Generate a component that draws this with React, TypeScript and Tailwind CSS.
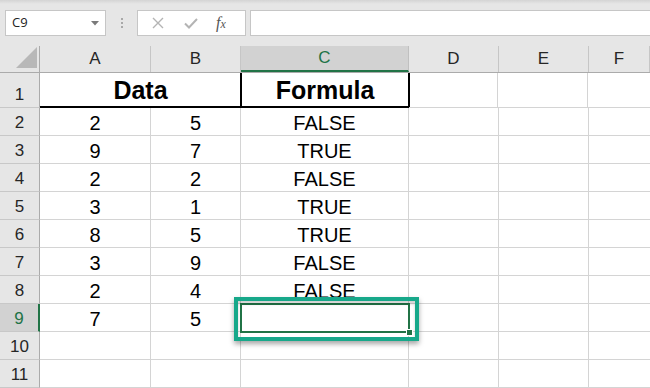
import React from "react";

const COLS = ["A", "B", "C", "D", "E", "F"];
const WIDTHS = ["w-[111px]", "w-[90px]", "w-[168px]", "w-[90px]", "w-[90px]", "flex-1"];

const rows: [string, string, string][] = [
  ["2", "5", "FALSE"],
  ["9", "7", "TRUE"],
  ["2", "2", "FALSE"],
  ["3", "1", "TRUE"],
  ["8", "5", "TRUE"],
  ["3", "9", "FALSE"],
  ["2", "4", "FALSE"],
  ["7", "5", ""],
  ["", "", ""],
  ["", "", ""],
];

function RowHeader({ n, active, tall }: { n: number; active?: boolean; tall?: boolean }) {
  return (
    <div
      className={`w-[40px] shrink-0 flex items-end justify-center border-r text-[17px] ${
        tall ? "leading-[24px]" : "leading-[25px]"
      } ${
        active
          ? "bg-[#d2d2d2] border-r-2 border-r-[#217346] text-[#217346]"
          : "bg-[#e6e6e6] border-[#ababab] text-[#262626]"
      } border-b border-b-[#c8c8c8]`}
    >
      {n}
    </div>
  );
}

export default function App() {
  return (
    <div className="relative w-[650px] h-[388px] overflow-hidden bg-white font-['Liberation_Sans',Arial,sans-serif] select-none">
      {/* formula bar */}
      <div className="h-[46px] bg-[#e6e6e6] relative">
        <div className="h-[4px] bg-gradient-to-b from-[#d4d4d4] to-[#e6e6e6]" />
        <div className="flex items-center h-[26px] mt-[6px]">
          <div className="ml-[5px] w-[101px] h-[26px] bg-white border border-[#c6c6c6] flex items-center justify-between pl-[6px] pr-[6px]">
            <span className="text-[13px] text-[#222] font-['Open_Sans',sans-serif]">C9</span>
            <svg width="8" height="5" viewBox="0 0 8 5">
              <path d="M0 0h8L4 4.5z" fill="#7a7a7a" />
            </svg>
          </div>
          <div className="w-[31px] flex flex-col items-center gap-[2px]">
            <span className="w-[2px] h-[2px] bg-[#a8a8a8]" />
            <span className="w-[2px] h-[2px] bg-[#a8a8a8]" />
            <span className="w-[2px] h-[2px] bg-[#a8a8a8]" />
          </div>
          <div className="w-[109px] h-[26px] bg-white border border-[#c6c6c6] flex items-center">
            <svg width="12" height="12" viewBox="0 0 12 12" className="ml-[14px]">
              <path d="M1 1l10 10M11 1L1 11" stroke="#b4b4b4" strokeWidth="1.4" />
            </svg>
            <svg width="14" height="11" viewBox="0 0 14 11" className="ml-[20px]">
              <path d="M1 5.5l4 4L13 1" stroke="#b4b4b4" strokeWidth="2" fill="none" />
            </svg>
            <span className="ml-[18px] italic text-[16px] text-[#555] font-['Liberation_Serif',serif]">
              f<span className="text-[12px]">x</span>
            </span>
          </div>
          <div className="ml-[4px] flex-1 h-[26px] bg-white border border-[#c6c6c6] border-r-0" />
        </div>
      </div>

      {/* column headers */}
      <div className="flex h-[27px] bg-[#e6e6e6] border-b border-[#ababab]">
        <div className="w-[40px] shrink-0 border-r border-[#ababab] relative">
          <svg width="21" height="21" viewBox="0 0 21 21" className="absolute left-[16px] top-[1px]">
            <path d="M21 0v21H0z" fill="#b8b8b8" />
          </svg>
        </div>
        {COLS.map((c, i) => (
          <div
            key={c}
            className={`${WIDTHS[i]} shrink-0 flex items-center justify-center text-[17px] border-r ${
              c === "C"
                ? "bg-[#d2d2d2] border-b-2 border-b-[#217346] text-[#217346] border-r-[#c0c0c0]"
                : "text-[#262626] border-[#c6c6c6]"
            }`}
          >
            {c}
          </div>
        ))}
      </div>

      {/* row 1 */}
      <div className="flex h-[35px]">
        <RowHeader n={1} tall />
        <div className="w-[201px] shrink-0 border-b-2 border-black flex items-end justify-center font-bold text-[25px] leading-[32px] text-black">
          Data
        </div>
        <div className="w-[170px] shrink-0 -ml-px border-2 border-t-0 border-black flex items-end justify-center font-bold text-[25px] leading-[32px] text-black">
          Formula
        </div>
        <div className="w-[89px] shrink-0 border-r border-b border-[#d4d4d4] -ml-px" />
        <div className="w-[90px] shrink-0 border-r border-b border-[#d4d4d4]" />
        <div className="flex-1 border-b border-[#d4d4d4]" />
      </div>

      {/* rows 2-11 */}
      {rows.map((r, idx) => {
        const n = idx + 2;
        return (
          <div key={n} className="flex h-[28px]">
            <RowHeader n={n} active={n === 9} />
            {COLS.map((c, i) => (
              <div
                key={c}
                className={`${WIDTHS[i]} shrink-0 flex items-center justify-center pt-[3px] text-[20px] text-black border-b border-[#d4d4d4] ${
                  i < 5 ? "border-r" : ""
                }`}
              >
                {i < 3 ? r[i] : ""}
              </div>
            ))}
          </div>
        );
      })}

      {/* active cell C9 */}
      <div className="absolute left-[240px] top-[303px] w-[170px] h-[30px] border-2 border-[#217346]" />
      <div className="absolute left-[406px] top-[329px] w-[7px] h-[7px] bg-[#217346] border border-white" />

      {/* highlight annotation */}
      <div className="absolute left-[234px] top-[297px] w-[185px] h-[44px] border-[4px] border-[#17a88a] shadow-[0_3px_5px_rgba(0,0,0,0.35),inset_0_3px_3px_rgba(0,0,0,0.18)]" />
    </div>
  );
}
